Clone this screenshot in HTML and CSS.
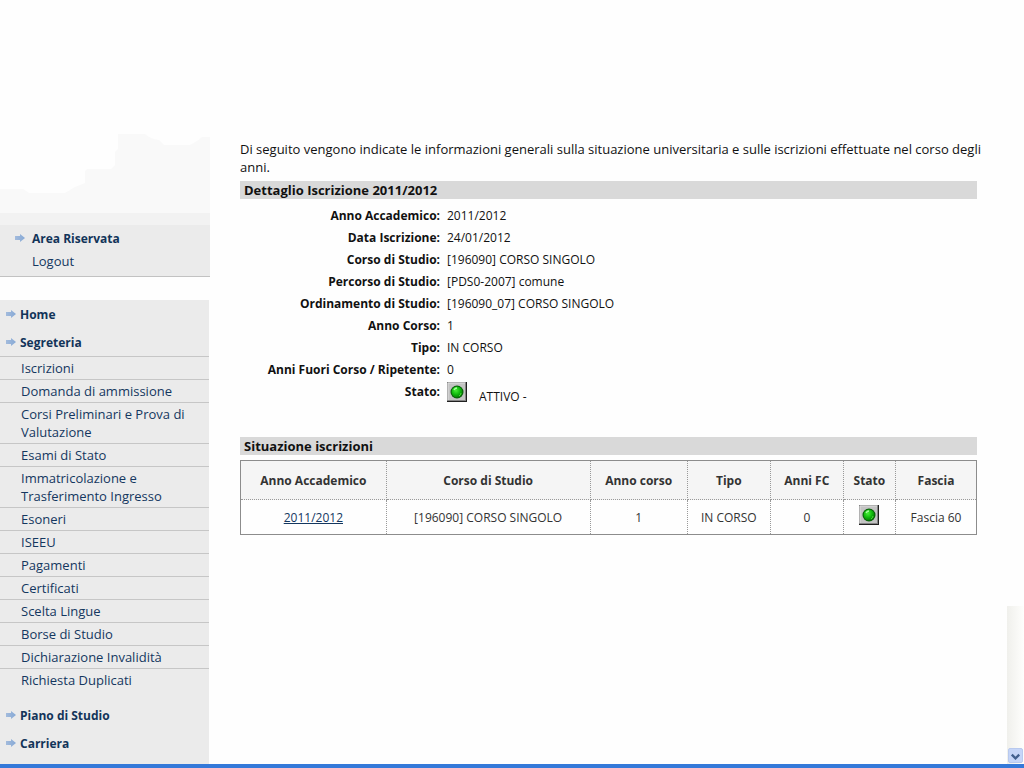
FILE: index.html
```html
<!DOCTYPE html>
<html lang="it">
<head>
<meta charset="utf-8">
<title>Situazione iscrizioni</title>
<link rel="stylesheet" href="styles.css">
</head>
<body>
<svg class="defs" aria-hidden="true">
  <defs>
    <linearGradient id="arrow-fill" x1="0" x2="1"><stop offset="0" stop-color="#a3bbdc"/><stop offset="1" stop-color="#86a9d6"/></linearGradient>
    <radialGradient id="led-fill" cx="0.4" cy="0.35" r="0.65"><stop offset="0" stop-color="#47ee35"/><stop offset="0.6" stop-color="#0fb80c"/><stop offset="1" stop-color="#068006"/></radialGradient>
    <symbol id="arrow" viewBox="0 0 10 10"><path d="M0 2H5V0L10 4L5 8V6H0Z" fill="url(#arrow-fill)"/></symbol>
    <symbol id="led" viewBox="0 0 20 20">
      <path d="M0 0H20V20H0Z" fill="#202020"/><path d="M0 0H19V19H0Z" fill="#858585"/><path d="M1 1H18V18H1Z" fill="#c3c3c3"/>
      <path d="M1 18V1H18" fill="none" stroke="#dedede"/>
      <circle cx="10" cy="10" r="6.5" fill="#075c07"/><circle cx="10" cy="10" r="5.5" fill="url(#led-fill)"/>
      <path d="M7 8Q8 6 10 6" fill="none" stroke="#a8ffa0" stroke-width="1.3"/><path d="M12 14Q14 13 14 11" fill="none" stroke="#50df3b"/>
    </symbol>
  </defs>
</svg>
<div class="page">
  <aside class="sidebar">
    <svg class="banner" viewBox="0 0 210 81" preserveAspectRatio="none" aria-hidden="true"><path d="M118 2H145Q150 7 159 8L164 13H190Q198 9 202 5H210V81H0V57H23L29 61H65L75 55L85 51V39L87 37H111L115 33V20L118 17Z" fill="#f9f9f9"/></svg>
    <div class="band"></div>
    <nav class="account" aria-label="Area Riservata">
      <a class="account-title" href="#"><svg class="arrow"><use href="#arrow"/></svg>Area Riservata</a>
      <a class="logout" href="#">Logout</a>
    </nav>
    <nav class="menu" aria-label="Menu">
      <a class="section" href="#"><svg class="arrow"><use href="#arrow"/></svg>Home</a>
      <a class="section" href="#"><svg class="arrow"><use href="#arrow"/></svg>Segreteria</a>
      <ul class="submenu">
        <li><a href="#">Iscrizioni</a></li>
        <li><a href="#">Domanda di ammissione</a></li>
        <li><a href="#">Corsi Preliminari e Prova di Valutazione</a></li>
        <li><a href="#">Esami di Stato</a></li>
        <li><a href="#">Immatricolazione e Trasferimento Ingresso</a></li>
        <li><a href="#">Esoneri</a></li>
        <li><a href="#">ISEEU</a></li>
        <li><a href="#">Pagamenti</a></li>
        <li><a href="#">Certificati</a></li>
        <li><a href="#">Scelta Lingue</a></li>
        <li><a href="#">Borse di Studio</a></li>
        <li><a href="#">Dichiarazione Invalidità</a></li>
        <li><a href="#">Richiesta Duplicati</a></li>
      </ul>
      <a class="section" href="#"><svg class="arrow"><use href="#arrow"/></svg>Piano di Studio</a>
      <a class="section" href="#"><svg class="arrow"><use href="#arrow"/></svg>Carriera</a>
    </nav>
  </aside>
  <main class="content">
    <p class="intro">Di seguito vengono indicate le informazioni generali sulla situazione universitaria e sulle iscrizioni effettuate nel corso degli anni.</p>
    <h2 class="title">Dettaglio Iscrizione 2011/2012</h2>
    <dl class="details">
      <dt>Anno Accademico:</dt><dd>2011/2012</dd>
      <dt>Data Iscrizione:</dt><dd>24/01/2012</dd>
      <dt>Corso di Studio:</dt><dd>[196090] CORSO SINGOLO</dd>
      <dt>Percorso di Studio:</dt><dd>[PDS0-2007] comune</dd>
      <dt>Ordinamento di Studio:</dt><dd>[196090_07] CORSO SINGOLO</dd>
      <dt>Anno Corso:</dt><dd>1</dd>
      <dt>Tipo:</dt><dd>IN CORSO</dd>
      <dt>Anni Fuori Corso / Ripetente:</dt><dd>0</dd>
      <dt>Stato:</dt><dd class="status"><svg class="led" role="img" aria-label="Attivo"><use href="#led"/></svg><span>ATTIVO -</span></dd>
    </dl>
    <h2 class="title">Situazione iscrizioni</h2>
    <table class="enrolments">
      <colgroup><col class="c-year"><col class="c-course"><col class="c-num"><col class="c-type"><col class="c-fc"><col class="c-state"><col class="c-band"></colgroup>
      <thead><tr><th>Anno Accademico</th><th>Corso di Studio</th><th>Anno corso</th><th>Tipo</th><th>Anni FC</th><th>Stato</th><th>Fascia</th></tr></thead>
      <tbody><tr><td><a href="#">2011/2012</a></td><td>[196090] CORSO SINGOLO</td><td>1</td><td>IN CORSO</td><td>0</td><td><svg class="led" role="img" aria-label="Attivo"><use href="#led"/></svg></td><td>Fascia 60</td></tr></tbody>
    </table>
  </main>
  <div class="scroll">
    <button class="scroll-down" type="button" aria-label="Scorri in basso"><svg viewBox="0 0 14 15"><path d="M3 6L7 10L11 6" fill="none" stroke="#42608f" stroke-width="2.5"/></svg></button>
  </div>
</div>
<div class="taskbar"></div>
</body>
</html>
```
FILE: styles.css
```css
* { box-sizing: border-box; }
body {
  margin: 0;
  min-height: 100vh;
  display: flex;
  flex-direction: column;
  background: #fefefe;
  color: #111;
  font: 12px/18px "Open Sans", "Noto Sans", sans-serif;
}
a { color: #14375f; text-decoration: none; }
.defs { position: absolute; width: 0; height: 0; }
.page { flex: 1; display: flex; }
.sidebar {
  flex: none;
  width: 210px;
  padding-top: 132px;
  display: flex;
  flex-direction: column;
}
.banner { display: block; width: 100%; height: 81px; }
.band { height: 12px; background: #f2f2f2; }
.account {
  display: flex;
  flex-direction: column;
  gap: 4px;
  padding: 5px 15px;
  height: 52px;
  background: #ebebeb;
  border-bottom: 1px solid #c2c2c2;
}
.account-title, .section { display: flex; align-items: center; font-weight: bold; color: #123459; }
.account-title { gap: 7px; }
.logout { padding-left: 17px; font-size: 13px; }
.arrow { width: 10px; height: 10px; }
.menu { flex: 1; margin: 23px 1px 0 0; padding-bottom: 7px; background: #ebebeb; }
.section { height: 28px; padding: 2px 0 0 6px; gap: 4px; }
.submenu { list-style: none; margin: 0 0 10px; padding: 0; font-size: 13px; }
.submenu li { border-top: 1px solid #c6c6c6; padding: 2px 20px 2px 21px; }
.content { flex: 1; min-width: 0; padding: 140px 30px 0; }
.intro { margin: 0 -8px 5px 0; font-size: 13px; }
.title {
  margin: 0 0 5px;
  padding-left: 4px;
  font-size: 13px;
  line-height: 18px;
  background: #d9d9d9;
  color: #111;
}
.details {
  display: grid;
  grid-template-columns: 200px 1fr;
  column-gap: 7px;
  margin: 0 0 29px;
  padding-top: 1px;
  line-height: 22px;
}
.details dt { text-align: right; font-weight: bold; }
.details dd { margin: 0; }
.led { width: 20px; height: 20px; vertical-align: middle; }
.status { display: flex; gap: 12px; padding-top: 1px; }
.status span { padding-top: 4px; }
.enrolments {
  width: 100%;
  table-layout: fixed;
  border-collapse: collapse;
  border: 1px solid #8c8c8c;
  color: #333;
}
.enrolments th, .enrolments td { padding: 2px 0 0; text-align: center; border: 1px dotted #999; }
.enrolments tr > :first-child { border-left: 1px solid #8c8c8c; }
.enrolments tr > :last-child { border-right: 1px solid #8c8c8c; }
.enrolments th { height: 39px; background: #f5f5f5; border-top: 1px solid #8c8c8c; }
.enrolments td { height: 35px; border-bottom: 1px solid #8c8c8c; }
.enrolments a { text-decoration: underline; }
.enrolments .led { display: block; margin: 0 auto 6px; }
.c-year { width: 19.8%; }
.c-course { width: 27.7%; }
.c-num { width: 13.2%; }
.c-type { width: 11.3%; }
.c-fc { width: 9.9%; }
.c-state { width: 7.1%; }
.c-band { width: 11%; }
.scroll {
  flex: none;
  align-self: flex-end;
  display: flex;
  align-items: flex-end;
  width: 17px;
  height: 158px;
  padding: 0 1px 1px;
  background: linear-gradient(90deg, #f0f0ec, #fefefc);
}
.scroll-down {
  width: 15px;
  height: 15px;
  padding: 0;
  border: 1px solid #b8c9ee;
  border-radius: 2px;
  background: #c5d5f8;
}
.scroll-down svg { display: block; width: 100%; }
.taskbar { height: 4px; background: #3479d9; }
```
